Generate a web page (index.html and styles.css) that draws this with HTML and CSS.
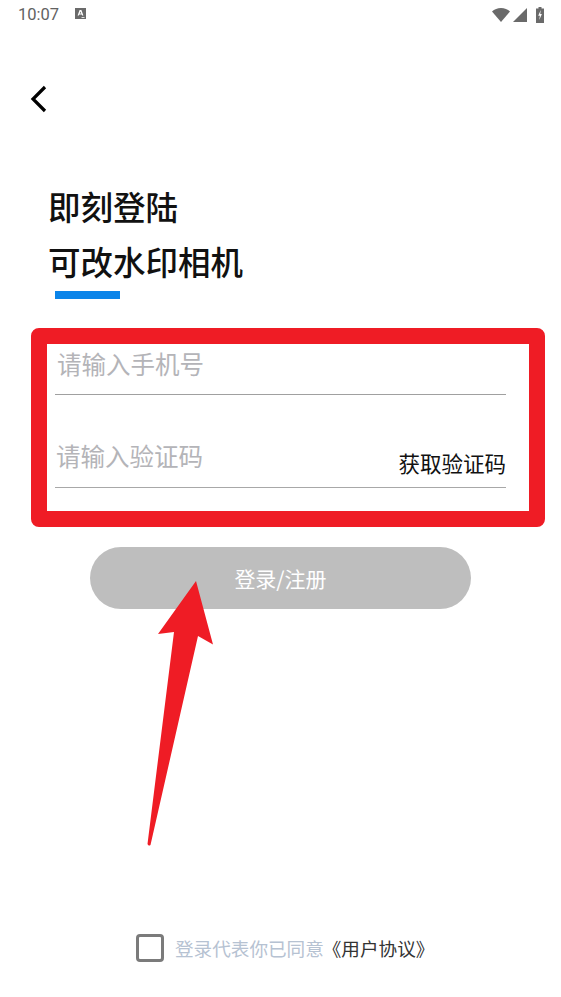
FILE: index.html
```html
<!DOCTYPE html>
<html lang="zh-CN">
<head>
<meta charset="utf-8">
<title>登录</title>
<link rel="stylesheet" href="styles.css">
</head>
<body>
<div class="screen">
  <div class="status">
    <div class="status-left">
      <span class="time">10:07</span>
      <svg class="a-icon" width="11" height="11" viewBox="0 0 11 11"><path fill="#6a6a6a" fill-rule="evenodd" d="M0 0h11v11H0zM4.6 2 2.6 7.5h1.3l.4-1.1h2.4l.4 1.1h1.3L6.4 2zM5.5 3.5l.8 2H4.7z"/><rect x="6.5" y="9" width="3" height="1" fill="#ddd"/></svg>
    </div>
    <div class="status-right">
      <svg width="18" height="14" viewBox="0 0 18 14"><path fill="#6a6a6a" d="M0 3.5C2.300 1.300 5.500 0 9 0s6.700 1.300 9 3.500L9 14z"/></svg>
      <svg width="14" height="14" viewBox="0 0 14 14"><path fill="#6a6a6a" d="M14 0v14H0z"/></svg>
      <svg class="batt" width="8" height="16" viewBox="0 0 8 16"><path fill="#6a6a6a" d="M2.500 0h3v1.500H8V16H0V1.500h2.500z"/><path fill="#fff" d="M4.800 3 2.200 8.800h1.700L3.200 13l2.700-6H4.200z"/></svg>
    </div>
  </div>
  <div class="nav">
    <svg width="18" height="28" viewBox="0 0 18 28"><path fill="none" stroke="#000" stroke-width="3.200" d="M15 2 3 14l12 12"/></svg>
  </div>
  <h1 class="title"><span class="title-line">即刻登陆</span><span class="title-line">可改水印相机</span></h1>
  <div class="accent"></div>
  <div class="form">
    <div class="field"><span class="placeholder">请输入手机号</span></div>
    <div class="field field-code"><span class="placeholder">请输入验证码</span><span class="get-code">获取验证码</span></div>
  </div>
  <div class="submit-row"><button class="submit">登录/注册</button></div>
  <div class="agree">
    <span class="check"></span>
    <span class="agree-text">登录代表你已同意</span><span class="agree-link">《用户协议》</span>
  </div>
  <div class="annot-box"></div>
  <svg class="annot-arrow" width="561" height="997" viewBox="0 0 561 997"><path fill="#ef1c25" d="M196 581 158 634 174 632 147.500 844Q148.500 846.500 150.500 845L198 636 213 644.500z"/></svg>
</div>
</body>
</html>
```
FILE: styles.css
```css
* { box-sizing: border-box; }
html, body { margin: 0; padding: 0; background: #fff; }
body { font-family: "Noto Sans CJK SC", "Noto Sans", sans-serif; }
.screen { position: relative; width: 561px; height: 997px; overflow: hidden; display: flex; flex-direction: column; background: #fff; }
.status { height: 30px; padding: 4px 17px 0 18px; display: flex; justify-content: space-between; align-items: flex-start; flex: none; }
.status-left { display: flex; align-items: center; gap: 16px; height: 22px; }
.time { font-family: Roboto, sans-serif; font-size: 16.500px; color: #626262; line-height: 22px; }
.a-icon { margin-top: -3px; }
.status-right { display: flex; align-items: center; gap: 3px; height: 22px; margin-top: 0; }
.batt { margin-left: 6px; }
.nav { padding: 55px 0 0 30px; height: 87px; flex: none; line-height: 0; }
.title { margin: 0; padding: 61px 0 0 48px; font-size: 32.500px; font-weight: 500; color: #111; display: flex; flex-direction: column; flex: none; }
.title-line { height: 55px; line-height: 55px; white-space: nowrap; }
.accent { width: 65px; height: 8px; margin: 3px 0 0 55px; background: #0a84e9; flex: none; }
.form { margin: 46px 55px 0; flex: none; }
.field { height: 50px; border-bottom: 1px solid #a0a0a0; display: flex; justify-content: space-between; align-items: flex-start; }
.field-code { height: 93px; position: relative; align-items: flex-end; border-bottom-color: #a8a8a8; }
.placeholder { font-size: 24.500px; line-height: 36px; color: #b4b4b8; padding-left: 2px; margin-top: 1px; white-space: nowrap; }
.field-code .placeholder { padding-left: 1px; margin: 0 0 13px; }
.get-code { font-size: 21.500px; line-height: 32px; color: #111; margin-bottom: 8px; white-space: nowrap; }
.submit-row { padding: 59px 90px 0; flex: none; }
.submit { display: block; width: 381px; height: 62px; border: 0; border-radius: 31px; background: #bebebe; color: #fff; font: inherit; font-size: 21px; padding: 0; }
.agree { margin-top: auto; margin-bottom: 35px; padding-left: 136px; display: flex; align-items: center; height: 29px; flex: none; }
.check { width: 28px; height: 28px; border: 3.500px solid #7b7b7b; border-radius: 4px; margin-right: 11px; flex: none; }
.agree-text { font-size: 18.600px; color: #b6c2d2; white-space: nowrap; }
.agree-link { font-size: 18.600px; color: #333; white-space: nowrap; margin-left: -1px; }
.annot-box { position: absolute; left: 31px; top: 328px; width: 514px; height: 199px; border: 16px solid #ef1c25; border-radius: 8px 8px 8px 8px; }
.annot-arrow { position: absolute; left: 0; top: 0; pointer-events: none; }
```
